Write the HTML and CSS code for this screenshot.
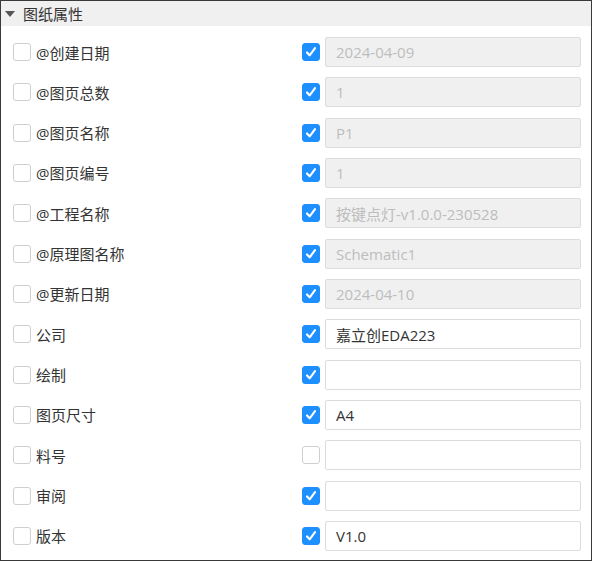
FILE: index.html
```html
<!DOCTYPE html>
<html>
	<head>
		<meta charset="utf-8">
		<title>图纸属性</title>
		<link rel="stylesheet" href="styles.css">
	</head>
	<body>
		<div class="panel">
			<div class="panel-head"><i class="arrow"></i>图纸属性</div>
			<div class="rows">
				<div class="row">
					<label class="name"><span class="cb"></span>@创建日期</label>
					<div class="val"><span class="cb on"><svg viewBox="0 0 18 18"><path d="M4.5 9.5l3 3.2 6-8"/></svg></span><input class="ipt" value="2024-04-09" disabled></div>
				</div>
				<div class="row">
					<label class="name"><span class="cb"></span>@图页总数</label>
					<div class="val"><span class="cb on"><svg viewBox="0 0 18 18"><path d="M4.5 9.5l3 3.2 6-8"/></svg></span><input class="ipt" value="1" disabled></div>
				</div>
				<div class="row">
					<label class="name"><span class="cb"></span>@图页名称</label>
					<div class="val"><span class="cb on"><svg viewBox="0 0 18 18"><path d="M4.5 9.5l3 3.2 6-8"/></svg></span><input class="ipt" value="P1" disabled></div>
				</div>
				<div class="row">
					<label class="name"><span class="cb"></span>@图页编号</label>
					<div class="val"><span class="cb on"><svg viewBox="0 0 18 18"><path d="M4.5 9.5l3 3.2 6-8"/></svg></span><input class="ipt" value="1" disabled></div>
				</div>
				<div class="row">
					<label class="name"><span class="cb"></span>@工程名称</label>
					<div class="val"><span class="cb on"><svg viewBox="0 0 18 18"><path d="M4.5 9.5l3 3.2 6-8"/></svg></span><input class="ipt" value="按键点灯-v1.0.0-230528" disabled></div>
				</div>
				<div class="row">
					<label class="name"><span class="cb"></span>@原理图名称</label>
					<div class="val"><span class="cb on"><svg viewBox="0 0 18 18"><path d="M4.5 9.5l3 3.2 6-8"/></svg></span><input class="ipt" value="Schematic1" disabled></div>
				</div>
				<div class="row">
					<label class="name"><span class="cb"></span>@更新日期</label>
					<div class="val"><span class="cb on"><svg viewBox="0 0 18 18"><path d="M4.5 9.5l3 3.2 6-8"/></svg></span><input class="ipt" value="2024-04-10" disabled></div>
				</div>
				<div class="row">
					<label class="name"><span class="cb"></span>公司</label>
					<div class="val"><span class="cb on"><svg viewBox="0 0 18 18"><path d="M4.5 9.5l3 3.2 6-8"/></svg></span><input class="ipt" value="嘉立创EDA223"></div>
				</div>
				<div class="row">
					<label class="name"><span class="cb"></span>绘制</label>
					<div class="val"><span class="cb on"><svg viewBox="0 0 18 18"><path d="M4.5 9.5l3 3.2 6-8"/></svg></span><input class="ipt" value=""></div>
				</div>
				<div class="row">
					<label class="name"><span class="cb"></span>图页尺寸</label>
					<div class="val"><span class="cb on"><svg viewBox="0 0 18 18"><path d="M4.5 9.5l3 3.2 6-8"/></svg></span><input class="ipt" value="A4"></div>
				</div>
				<div class="row">
					<label class="name"><span class="cb"></span>料号</label>
					<div class="val"><span class="cb"></span><input class="ipt" value=""></div>
				</div>
				<div class="row">
					<label class="name"><span class="cb"></span>审阅</label>
					<div class="val"><span class="cb on"><svg viewBox="0 0 18 18"><path d="M4.5 9.5l3 3.2 6-8"/></svg></span><input class="ipt" value=""></div>
				</div>
				<div class="row">
					<label class="name"><span class="cb"></span>版本</label>
					<div class="val"><span class="cb on"><svg viewBox="0 0 18 18"><path d="M4.5 9.5l3 3.2 6-8"/></svg></span><input class="ipt" value="V1.0"></div>
				</div>
			</div>
		</div>
	</body>
</html>
```

FILE: styles.css
```css
*{margin:0;padding:0;box-sizing:border-box;}
body{background:#fff;font-family:"Open Sans","Noto Sans CJK SC",sans-serif;font-size:15px;color:#333;}
.panel{width:592px;height:561px;border:1px solid #3a3a3a;background:#fff;}
.panel-head{height:25px;background:#f0f0f0;display:flex;align-items:center;padding-left:4px;font-size:15px;color:#333;}
.panel-head .arrow{width:0;height:0;border-left:5px solid transparent;border-right:5px solid transparent;border-top:6px solid #555;margin-right:8px;margin-top:1px;}

.rows{display:flex;flex-direction:column;gap:10.33px;padding:11px 10px 0 12px;}
.row{display:flex;align-items:center;height:30px;}
.name{display:flex;align-items:center;width:289px;}
.name .cb{margin-right:5px;}
.val{flex:1;display:flex;align-items:center;}
.val .cb{margin-right:5px;}

.cb{display:inline-block;width:18px;height:18px;border:1px solid #cfcfcf;border-radius:3px;background:#fff;flex:none;}
.cb.on{background:#1e8fff;border-color:#1e8fff;}
.cb svg{display:block;width:16px;height:16px;}
.cb svg path{fill:none;stroke:#fff;stroke-width:2.4;stroke-linecap:round;stroke-linejoin:round;}

.ipt{flex:1;height:30px;border:1px solid #dcdcdc;border-radius:2px;background:#fff;padding:0 10px;font-family:inherit;font-size:15px;color:#333;outline:none;}
.ipt:disabled{background:#f0f0f0;color:#bdbdbd;}
```
